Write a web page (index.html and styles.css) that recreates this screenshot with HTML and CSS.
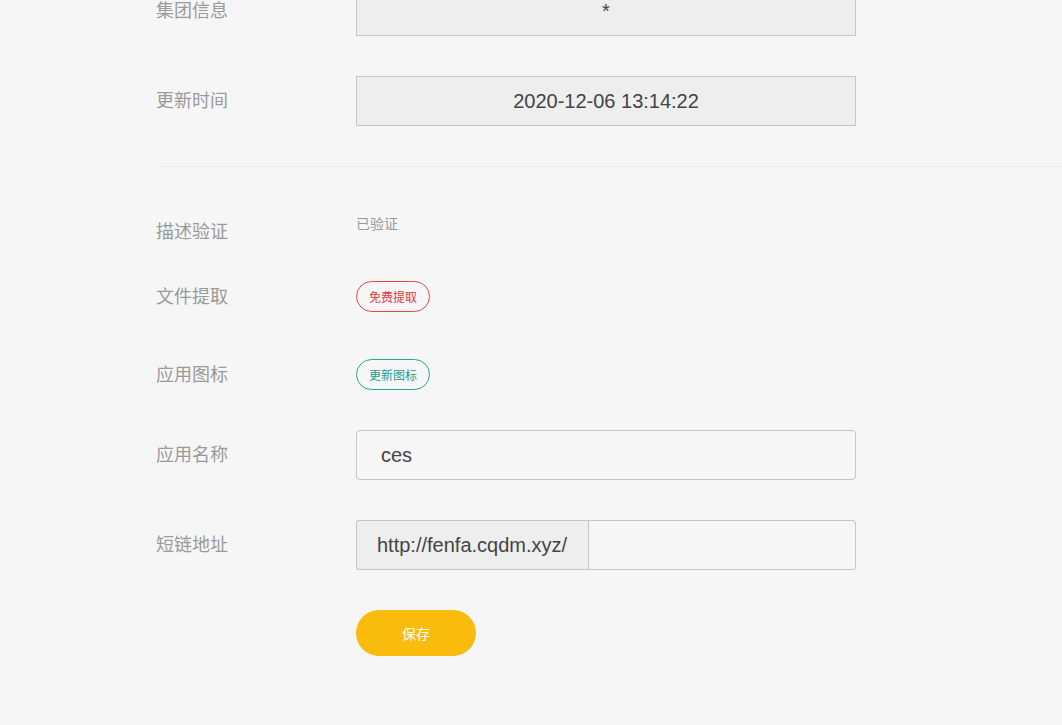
FILE: index.html
```html
<!DOCTYPE html>
<html lang="zh-CN">
<head>
    <meta charset="UTF-8">
    <meta name="viewport" content="width=device-width, initial-scale=1.0">
    <title>应用设置</title>
    <link rel="stylesheet" href="styles.css">
</head>
<body>
    <div class="container">
        <div class="form-row">
            <label class="form-label">集团信息</label>
            <input class="form-input is-disabled" type="text" value="*" disabled>
        </div>

        <div class="form-row">
            <label class="form-label">更新时间</label>
            <input class="form-input is-disabled" type="text" value="2020-12-06 13:14:22" disabled>
        </div>

        <div class="divider"></div>

        <div class="form-row row-verify">
            <label class="form-label">描述验证</label>
            <div class="verify-text">已验证</div>
        </div>

        <div class="form-row row-file">
            <label class="form-label">文件提取</label>
            <button type="button" class="btn-outline btn-red">免费提取</button>
        </div>

        <div class="form-row">
            <label class="form-label">应用图标</label>
            <button type="button" class="btn-outline btn-teal">更新图标</button>
        </div>

        <div class="form-row">
            <label class="form-label">应用名称</label>
            <input class="form-input input-name" type="text" value="ces">
        </div>

        <div class="form-row">
            <label class="form-label">短链地址</label>
            <div class="input-group">
                <span class="input-prefix">http://fenfa.cqdm.xyz/</span>
                <input class="input-short" type="text" value="">
            </div>
        </div>

        <div class="form-row">
            <span class="form-label"></span>
            <button type="button" class="btn-save">保存</button>
        </div>
    </div>
</body>
</html>
```

FILE: styles.css
```css
body {
	margin: 0;
	background-color: #f6f6f6;
	font-family: "Liberation Sans", "Noto Sans CJK SC", sans-serif;
	overflow: hidden;
}

.container {
	margin-top: -14px;
	padding-left: 156px;
}

.form-row {
	display: flex;
	align-items: center;
	margin-bottom: 40px;
}

.form-label {
	width: 200px;
	flex-shrink: 0;
	font-size: 18px;
	line-height: 24px;
	color: #9a9a9a;
}

.form-input {
	box-sizing: border-box;
	width: 500px;
	height: 50px;
	padding: 0 24px;
	border: 1px solid #bec8c6;
	border-radius: 4px;
	background-color: #f6f6f6;
	font-family: "Liberation Sans", "Noto Sans CJK SC", sans-serif;
	font-size: 20px;
	color: #444;
	outline: none;
}

.form-input.is-disabled {
	border-radius: 0;
	background-color: #eeeeee;
	text-align: center;
	color: #444;
	-webkit-text-fill-color: #444;
	opacity: 1;
}

.divider {
	height: 1px;
	background-color: #ececec;
	margin-bottom: 39px;
}

.row-verify {
	height: 50px;
	align-items: flex-start;
	margin-bottom: 25px;
}

.row-verify .form-label {
	align-self: center;
	margin-top: 1px;
}

.verify-text {
	margin-top: 8px;
	font-size: 14px;
	line-height: 20px;
	color: #999;
}

.row-file {
	margin-bottom: 47px;
}

.btn-outline {
	box-sizing: border-box;
	height: 31px;
	width: 74px;
	padding: 0;
	border-radius: 16px;
	background-color: transparent;
	font-family: "Liberation Sans", "Noto Sans CJK SC", sans-serif;
	font-size: 12px;
	cursor: pointer;
}

.btn-red {
	border: 1px solid #e8454c;
	color: #e8383f;
}

.btn-teal {
	border: 1px solid #26a69a;
	color: #1e9a8c;
}

.input-group {
	display: flex;
	width: 500px;
	height: 50px;
}

.input-prefix {
	box-sizing: border-box;
	display: flex;
	align-items: center;
	height: 50px;
	padding: 0 21px 0 20px;
	border: 1px solid #bec8c6;
	border-right: none;
	border-radius: 3px 0 0 3px;
	background-color: #eeeeee;
	font-size: 20px;
	color: #444;
	white-space: nowrap;
}

.input-short {
	box-sizing: border-box;
	flex: 1;
	height: 50px;
	border: 1px solid #bec8c6;
	border-radius: 0 3px 3px 0;
	background-color: #f6f6f6;
	outline: none;
}

.btn-save {
	width: 120px;
	height: 46px;
	border: none;
	border-radius: 23px;
	background-color: #f9bc0c;
	color: white;
	font-family: "Liberation Sans", "Noto Sans CJK SC", sans-serif;
	font-size: 14px;
	cursor: pointer;
}
```
